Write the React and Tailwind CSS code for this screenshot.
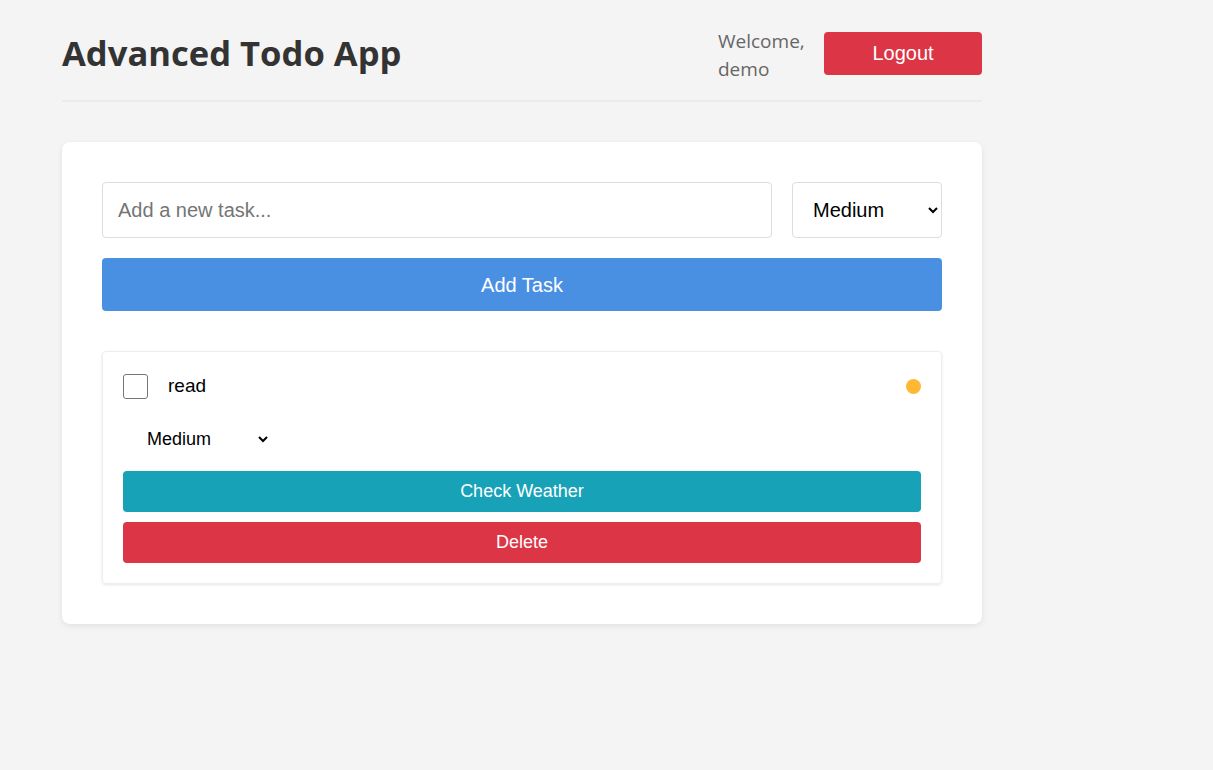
import React from "react";

export default function App() {
  return (
    <div className="min-h-[770px] w-full bg-[#f4f4f4] pl-[62px] pt-[25px]" style={{ fontFamily: '"Liberation Sans", Arial, sans-serif' }}>
      <div className="w-[920px]">
        <header className="flex items-center justify-between border-b-2 border-[#ebebeb] pb-[19px]">
          <h1 className="text-[34.6px] font-bold leading-[1.2] text-[#333]" style={{ fontFamily: '"Open Sans", "Noto Sans", sans-serif' }}>
            Advanced Todo App
          </h1>
          <div className="flex items-center gap-[20px]">
            <span className="w-[86px] translate-y-[2px] text-[19px] leading-[28px] text-[#666]" style={{ fontFamily: '"Open Sans", "Noto Sans", sans-serif' }}>
              Welcome, demo
            </span>
            <button className="h-[43px] w-[158px] rounded-[4px] bg-[#dc3545] text-[20px] text-white">Logout</button>
          </div>
        </header>

        <main className="mt-[40px] rounded-[8px] bg-white p-[40px] shadow-[0_2px_6px_rgba(0,0,0,0.08)]">
          <div className="flex gap-[20px]">
            <input
              className="h-[56px] flex-1 rounded-[4px] border border-[#ddd] px-[15px] text-[20px] text-black placeholder:text-[#757575] outline-none"
              placeholder="Add a new task..."
            />
            <select defaultValue="Medium" className="h-[56px] w-[150px] rounded-[4px] border border-[#ddd] bg-white px-[16px] text-[20px] text-black outline-none">
              <option>Low</option>
              <option>Medium</option>
              <option>High</option>
            </select>
          </div>
          <button className="mt-[20px] h-[53px] w-full rounded-[4px] bg-[#4a90e2] text-[20px] text-white">Add Task</button>

          <div className="mt-[40px] rounded-[4px] border border-[#eee] px-[20px] pb-[20px] pt-[20px] shadow-[0_1px_3px_rgba(0,0,0,0.1)]">
            <div className="flex items-center justify-between">
              <div className="flex items-center gap-[20px]">
                <span className="h-[25px] w-[25px] rounded-[3px] border border-[#767676] bg-white" />
                <span className="text-[19px] text-black">read</span>
              </div>
              <span className="h-[15px] w-[15px] rounded-full bg-[#ffb833]" />
            </div>
            <div className="mt-[20px] pl-[20px]">
              <select defaultValue="Medium" className="h-[36px] w-[128px] border-none bg-transparent text-[18px] text-black outline-none">
                <option>Low</option>
                <option>Medium</option>
                <option>High</option>
              </select>
            </div>
            <button className="mt-[14px] h-[41px] w-full rounded-[4px] bg-[#17a2b8] text-[18px] text-white">Check Weather</button>
            <button className="mt-[10px] h-[41px] w-full rounded-[4px] bg-[#dc3545] text-[18px] text-white">Delete</button>
          </div>
        </main>
      </div>
    </div>
  );
}
